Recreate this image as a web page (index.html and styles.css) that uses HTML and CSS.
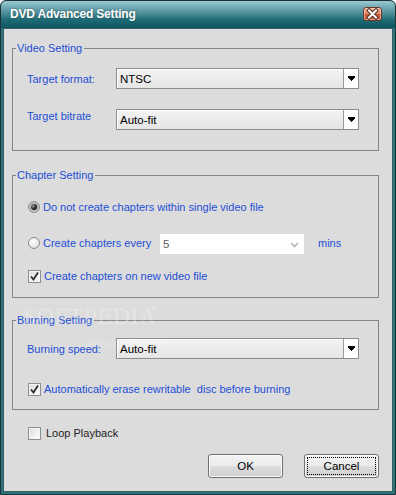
FILE: index.html
```html
<!DOCTYPE html>
<html>
<head>
<meta charset="utf-8">
<link rel="stylesheet" href="styles.css">
</head>
<body>
<div class="window">
  <div class="titlebar">
    <span class="title">DVD Advanced Setting</span>
    <span class="close"><svg width="17" height="12" viewBox="0 0 17 12"><path d="M5 2.5 L12 9.5 M12 2.5 L5 9.5" stroke="#5a2a1c" stroke-width="4" stroke-linecap="square"/><path d="M5 2.5 L12 9.5 M12 2.5 L5 9.5" stroke="#ffffff" stroke-width="2" stroke-linecap="square"/></svg></span>
  </div>
  <div class="client">
    <div class="group g1">
      <div class="legend">Video Setting</div>
      <div class="row r-first">
        <span class="label">Target format:</span>
        <div class="select"><span class="val">NTSC</span><span class="arrow"><svg width="7" height="5" viewBox="0 0 7 5"><path d="M0 0h7v1h-7z M0 1h7v1h-7z M1 2h5v1h-5z M2 3h3v1h-3z M3 4h1v1h-1z" fill="#000"/></svg></span></div>
      </div>
      <div class="row r-second">
        <span class="label lab-up">Target bitrate</span>
        <div class="select"><span class="val">Auto-fit</span><span class="arrow"><svg width="7" height="5" viewBox="0 0 7 5"><path d="M0 0h7v1h-7z M0 1h7v1h-7z M1 2h5v1h-5z M2 3h3v1h-3z M3 4h1v1h-1z" fill="#000"/></svg></span></div>
      </div>
    </div>

    <div class="group g2">
      <div class="legend">Chapter Setting</div>
      <div class="row opt r-radio1">
        <span class="radio checked"><span class="dot"></span></span>
        <span class="text">Do not create chapters within single video file</span>
      </div>
      <div class="row opt r-radio2">
        <span class="radio"></span>
        <span class="text every">Create chapters every</span>
        <div class="spin"><span class="spin-val">5</span><svg width="9" height="6" viewBox="0 0 9 6"><path d="M1 1 L4.5 4.5 L8 1" fill="none" stroke="#b4b4b4" stroke-width="1.6"/></svg></div>
        <span class="text mins">mins</span>
      </div>
      <div class="row opt r-check">
        <span class="check"><svg width="11" height="11" viewBox="0 0 11 11"><path d="M2 5.5 L4.5 8.5 L9 1.5" fill="none" stroke="#2b2b2b" stroke-width="1.8"/></svg></span>
        <span class="text">Create chapters on new video file</span>
      </div>
    </div>

    <div class="group g3">
      <div class="legend">Burning Setting</div>
      <div class="row r-burn">
        <span class="label">Burning speed:</span>
        <div class="select"><span class="val">Auto-fit</span><span class="arrow"><svg width="7" height="5" viewBox="0 0 7 5"><path d="M0 0h7v1h-7z M0 1h7v1h-7z M1 2h5v1h-5z M2 3h3v1h-3z M3 4h1v1h-1z" fill="#000"/></svg></span></div>
      </div>
      <div class="row opt r-erase">
        <span class="check"><svg width="11" height="11" viewBox="0 0 11 11"><path d="M2 5.5 L4.5 8.5 L9 1.5" fill="none" stroke="#2b2b2b" stroke-width="1.8"/></svg></span>
        <span class="text">Automatically erase rewritable&nbsp; disc before burning</span>
      </div>
    </div>

    <div class="row loop">
      <span class="check"></span>
      <span class="text dark">Loop Playback</span>
    </div>

    <div class="buttons">
      <button class="btn">OK</button>
      <button class="btn focus"><span class="focus-ring">Cancel</span></button>
    </div>

    <div class="watermark"><span class="wm-big">SOFTPEDIA</span><span class="wm-tm">™</span><span class="wm-url">www.softpedia.com</span></div>
  </div>
</div>
</body>
</html>
```
FILE: styles.css
```css
* { box-sizing: border-box; }
html, body { margin: 0; padding: 0; }
body {
  width: 396px;
  height: 495px;
  font-family: "Liberation Sans", Arial, sans-serif;
  font-size: 11px;
  background: #ffffff;
}
.window {
  width: 396px;
  height: 495px;
  border: 1px solid #1a3136;
  border-radius: 6px 6px 0 0;
  background: #2b737d;
  padding: 0 2px 2px 2px;
  display: flex;
  flex-direction: column;
  overflow: hidden;
}
.titlebar {
  height: 27px;
  flex: none;
  margin: 0 -2px;
  padding: 0 13px 0 9px;
  display: flex;
  align-items: center;
  justify-content: space-between;
  background: linear-gradient(to bottom, #9cc9d1 0%, #6fa8b2 25%, #468791 50%, #1d6a75 70%, #0d5661 100%);
  border-radius: 5px 5px 0 0;
}
.title {
  color: #ffffff;
  font-weight: bold;
  font-size: 12px;
  letter-spacing: -0.2px;
  text-shadow: 0 0 2px rgba(0,40,50,0.6);
  margin-top: -1px;
}
.close {
  width: 19px;
  height: 14px;
  margin-top: -1px;
  border: 1px solid #6a3a2a;
  border-radius: 3px;
  background: linear-gradient(to bottom, #f0b49a 0%, #e08a68 45%, #c8553a 55%, #c86448 100%);
  display: flex;
  align-items: center;
  justify-content: center;
  box-shadow: inset 0 0 0 1px rgba(255,220,200,0.5);
}
.close svg { display: block; }
.client {
  flex: 1;
  position: relative;
  background: #dcdcdc;
  border: 1px solid #3c5f65;
  display: flex;
  flex-direction: column;
}
.group {
  margin-left: 8px;
  width: 367px;
  border: 1px solid #858585;
  padding-left: 14px;
}
.legend {
  margin: -8px 0 0 -11px;
  padding: 0 2px 0 1px;
  width: fit-content;
  line-height: 14px;
  height: 14px;
  background: #dcdcdc;
  color: #1c4fd6;
  font-size: 11px;
}
.g1 { margin-top: 19px; padding-bottom: 20px; }
.g2 { margin-top: 24px; padding-bottom: 14px; padding-left: 15px; }
.g2 .legend { margin-left: -12px; }
.g3 { margin-top: 22px; padding-bottom: 13px; }
.row {
  display: flex;
  align-items: center;
}
.r-first { margin-top: 13px; height: 21px; }
.r-second { margin-top: 20px; height: 21px; }
.r-radio1 { margin-top: 18px; height: 14px; }
.r-radio2 { margin-top: 20px; height: 20px; }
.r-check { margin-top: 15px; height: 14px; }
.r-burn { margin-top: 11px; height: 21px; }
.r-erase { margin-top: 23px; height: 14px; padding-left: 1px; }
.label {
  width: 89px;
  flex: none;
  color: #1c4fd6;
  font-size: 11px;
}
.lab-up { margin-top: -8px; }
.select {
  width: 243px;
  height: 21px;
  border: 1px solid #8c8c8c;
  background: linear-gradient(to bottom, #f3f3f3, #e5e5e5);
  display: flex;
  align-items: center;
  box-shadow: inset 1px 1px 0 #ffffff;
}
.val {
  flex: 1;
  padding-left: 3px;
  color: #000;
  font-size: 11.5px;
}
.arrow {
  width: 15px;
  height: 19px;
  border-left: 1px solid #9a9a9a;
  background: #ffffff;
  display: flex;
  align-items: center;
  justify-content: center;
}
.arrow svg { display: block; margin-left: 1px; }
.text {
  color: #1c4fd6;
  font-size: 11px;
  white-space: nowrap;
}
.radio {
  width: 12px;
  height: 12px;
  flex: none;
  border-radius: 50%;
  border: 1px solid #8d8d8d;
  background: radial-gradient(circle at 40% 35%, #ffffff 0%, #e6e6e6 60%, #cfcfcf 100%);
  margin-right: 3px;
  display: flex;
  align-items: center;
  justify-content: center;
}
.radio.checked {
  background: radial-gradient(circle, #9a9a9a 0%, #bdbdbd 60%, #d8d8d8 100%);
}
.dot {
  width: 6px;
  height: 6px;
  border-radius: 50%;
  background: radial-gradient(circle at 35% 35%, #9a9a9a 0%, #2a2a2a 50%, #000 100%);
}
.r-radio2 .radio { margin-top: -3px; }
.every { width: 117px; margin-top: -3px; }
.spin {
  width: 144px;
  height: 20px;
  background: #ffffff;
  display: flex;
  align-items: center;
  justify-content: space-between;
  padding: 0 5px 0 3px;
}
.spin-val { color: #5a5a5a; font-size: 11.5px; }
.spin svg { display: block; margin-top: 2px; }
.mins { margin-left: 14px; margin-top: -2px; }
.check {
  width: 13px;
  height: 13px;
  flex: none;
  border: 1px solid #8e8f8f;
  background: linear-gradient(135deg, #d6d6d6 0%, #efefef 50%, #ffffff 100%);
  box-shadow: inset 0 0 0 1px #f4f4f4;
  margin-right: 3px;
  display: flex;
  align-items: center;
  justify-content: center;
}
.check svg { display: block; }
.loop {
  margin-top: 16px;
  margin-left: 24px;
  height: 14px;
}
.loop .check { margin-right: 5px; }
.dark { color: #1e1e1e; }
.buttons {
  margin-top: 14px;
  display: flex;
  justify-content: flex-end;
  gap: 21px;
  padding-right: 13px;
}
.btn {
  width: 75px;
  height: 24px;
  border: 1px solid #707070;
  border-radius: 3px;
  background: linear-gradient(to bottom, #f3f3f3 0%, #ebebeb 48%, #dddddd 52%, #cfcfcf 100%);
  box-shadow: inset 0 0 0 1px #fbfbfb;
  font-family: "Liberation Sans", Arial, sans-serif;
  font-size: 11.5px;
  color: #000;
  padding: 0;
  display: flex;
  align-items: center;
  justify-content: center;
}
.btn.focus { padding: 2px; }
.focus-ring {
  width: 100%;
  height: 100%;
  border: 1px dotted #000;
  display: flex;
  align-items: center;
  justify-content: center;
}
.watermark {
  position: absolute;
  left: 19px;
  top: 274px;
  width: 180px;
  height: 50px;
  pointer-events: none;
}
.wm-big {
  position: absolute;
  left: 0;
  top: 0;
  font-family: "Liberation Serif", serif;
  font-size: 24px;
  letter-spacing: 0.5px;
  color: rgba(255,255,255,0.28);
}
.wm-tm {
  position: absolute;
  left: 125px;
  top: 2px;
  font-size: 8px;
  color: rgba(255,255,255,0.35);
}
.wm-url {
  position: absolute;
  left: 62px;
  top: 35px;
  font-size: 10px;
  color: rgba(255,255,255,0.28);
}
```
